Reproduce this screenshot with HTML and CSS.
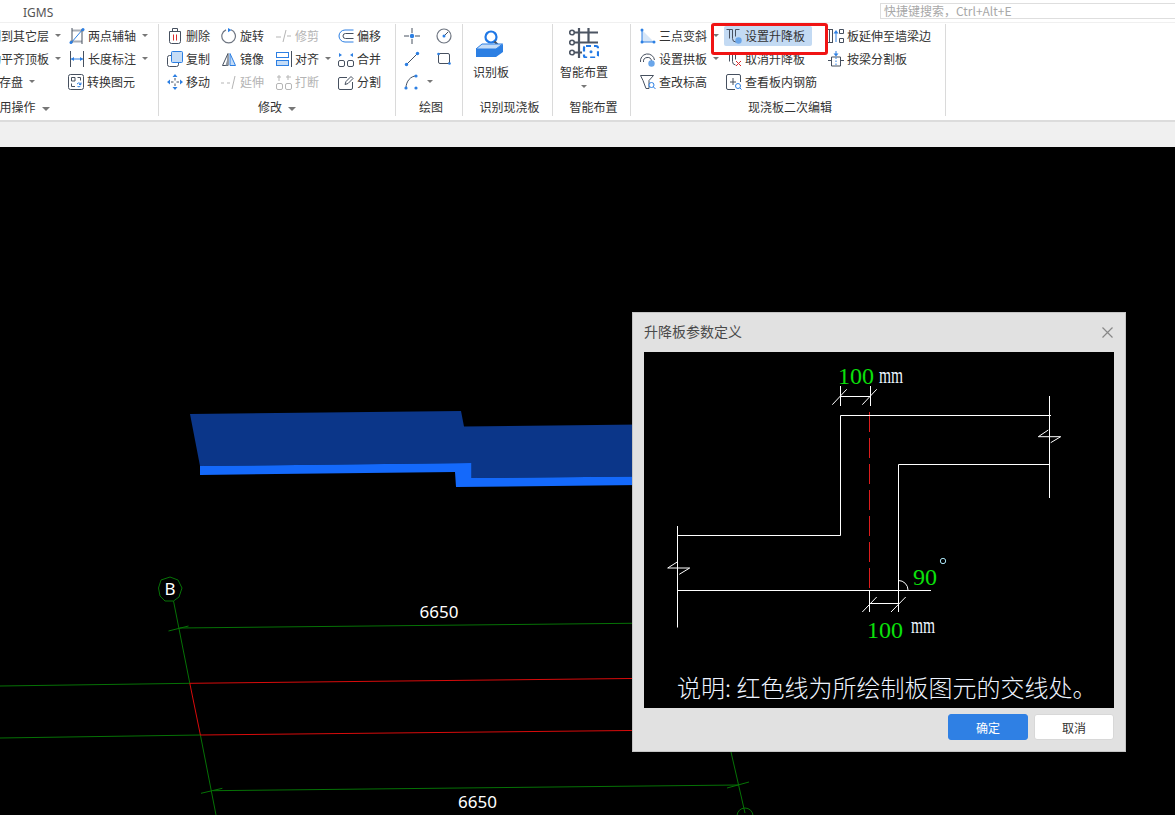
FILE: index.html
```html
<!DOCTYPE html>
<html lang="zh-CN">
<head>
<meta charset="utf-8">
<title>IGMS</title>
<link rel="stylesheet" href="styles.css">
</head>
<body>
<div class="app">
  <header class="titlebar">
    <span class="app-name">IGMS</span>
    <div class="search">快捷键搜索&#xFF0C;Ctrl+Alt+E</div>
  </header>

  <div class="ribbon">
    <section class="group group-common">
      <div class="tools cols-common">
        <div class="tool"><svg class="ico" viewBox="0 0 16 16"></svg><span>复制到其它层</span><i class="caret"></i></div>
        <div class="tool"><svg class="ico" viewBox="0 0 16 16"><path d="M3 2.500h12M1 13.500h12" class="st-gray-thick"/><path d="M3 0v15M13 1v15" class="st-dark"/><path d="M2 15L14 1" class="st-blue"/><circle cx="2" cy="14.500" r="1.500" class="fill-blue"/><circle cx="14" cy="1.500" r="1.500" class="fill-blue"/></svg><span>两点辅轴</span><i class="caret"></i></div>
        <div class="tool"><svg class="ico" viewBox="0 0 16 16"></svg><span>自动平齐顶板</span><i class="caret"></i></div>
        <div class="tool"><svg class="ico" viewBox="0 0 16 16"><path d="M1.500 0v16M14.500 0v16" class="st-dark"/><path d="M2 8h12" class="st-blue"/><path d="M2 8l3-2v4zM14 8l-3-2v4z" class="fill-blue"/></svg><span>长度标注</span><i class="caret"></i></div>
        <div class="tool tool-short"><svg class="ico" viewBox="0 0 16 16"></svg><span>云存盘</span><i class="caret"></i></div>
        <div class="tool tool-convert"><svg class="ico" viewBox="0 0 16 16"><rect x=".5" y=".5" width="15" height="15" rx="2" class="st-dark"/><path d="M3.500 7V3.500H7V7zM9.500 3.500h3v3M3.500 9.500v3H7" class="st-dark"/><path d="M9 10a2.500 2.500 0 0 1 3.500-.5M13 8.500v2h-2M12.500 12a2.500 2.500 0 0 1-3 .5" class="st-blue"/></svg><span>转换图元</span></div>
      </div>
      <div class="group-label">常用操作<i class="caret caret-label"></i></div>
    </section>

    <section class="group group-edit">
      <div class="tools cols-edit">
        <div class="tool"><svg class="ico" viewBox="0 0 16 16"><path d="M2.500 3.500h11v10a2 2 0 0 1-2 2h-7a2 2 0 0 1-2-2zM5.500 3.500V.5h5v3" class="st-dark"/><path d="M6.500 6.500v6M9.500 6.500v6" class="st-red"/></svg><span>删除</span></div>
        <div class="tool"><svg class="ico" viewBox="0 0 16 16"><path d="M10 1.800A6.800 6.800 0 1 1 5 1.900" class="st-grayd"/><path d="M7 0l3.500 2L7 4.200z" class="fill-blue"/></svg><span>旋转</span></div>
        <div class="tool tool-off"><svg class="ico" viewBox="0 0 16 16"><path d="M0 9h5M11 8h4M7 14l3-12" class="st-gray"/></svg><span>修剪</span></div>
        <div class="tool"><svg class="ico" viewBox="0 0 16 16"><path d="M15.500 2H7a6 6 0 0 0 0 12h8.500" class="st-blue"/><path d="M15.500 5.500H7.500a2.500 2.500 0 0 0 0 5h8" class="st-dark"/></svg><span>偏移</span></div>

        <div class="tool"><svg class="ico" viewBox="0 0 16 16"><rect x=".5" y="4.500" width="11" height="11" rx="2" class="st-dark"/><rect x="4.500" y=".5" width="11" height="11" rx="1" class="fill-light st-blue"/></svg><span>复制</span></div>
        <div class="tool"><svg class="ico" viewBox="0 0 16 16"><path d="M7 2.500L1.500 14.500H7z" class="fill-white st-dark"/><path d="M7.500 4v10.500H4.500z" class="fill-gray"/><path d="M9 2.500l5.500 12H9z" class="fill-light st-blue"/></svg><span>镜像</span></div>
        <div class="tool tool-align"><svg class="ico" viewBox="0 0 16 16"><rect x=".5" y="1.500" width="12" height="5" class="st-blue"/><rect x=".5" y="9.500" width="12" height="5" class="fill-light st-blue"/><path d="M15.500 0v16" class="st-dark"/></svg><span>对齐</span><i class="caret"></i></div>
        <div class="tool"><svg class="ico" viewBox="0 0 16 16"><rect x=".5" y="9.500" width="6" height="6" rx="1.500" class="st-dark"/><rect x="9.500" y="9.500" width="6" height="6" rx="1.500" class="st-dark"/><path d="M1 2l3 2-3 2zM15 2l-3 2 3 2z" class="fill-blue"/></svg><span>合并</span></div>

        <div class="tool"><svg class="ico" viewBox="0 0 16 16"><path d="M8 4v2.500M8 9.500V12M4 8h2.500M9.500 8H12" class="st-dark"/><path d="M8 0l2.500 3h-5zM8 16l2.500-3h-5zM0 8l3-2.500v5zM16 8l-3-2.500v5z" class="fill-blue"/></svg><span>移动</span></div>
        <div class="tool tool-off"><svg class="ico" viewBox="0 0 16 16"><path d="M0 9h3M6 9h3M11 15l3-13" class="st-gray"/></svg><span>延伸</span></div>
        <div class="tool tool-off"><svg class="ico" viewBox="0 0 16 16"><rect x=".5" y="9.500" width="6" height="6" rx="1.500" class="st-gray"/><rect x="9.500" y="9.500" width="6" height="6" rx="1.500" class="st-gray"/><path d="M3 1v6M1 3h4M10 3h5M12 1v5" class="st-gray"/></svg><span>打断</span></div>
        <div class="tool"><svg class="ico" viewBox="0 0 16 16"><path d="M9 3.500H2a1.500 1.500 0 0 0-1.500 1.500v9a1.500 1.500 0 0 0 1.500 1.500h11a1.500 1.500 0 0 0 1.500-1.500V8" class="st-dark"/><path d="M7 10.500l1-3 5-5 2 2-5 5z" class="st-dark"/></svg><span>分割</span></div>
      </div>
      <div class="group-label">修改<i class="caret caret-label"></i></div>
    </section>

    <section class="group group-draw">
      <div class="tools cols-draw">
        <div class="tool"><svg class="ico" viewBox="0 0 16 16"><path d="M0 8h5M11 8h5M8 0v5M8 11v5" class="st-dark"/><circle cx="8" cy="8" r="2.200" class="fill-blue"/></svg></div>
        <div class="tool"><svg class="ico" viewBox="0 0 16 16"><circle cx="8" cy="8" r="7" class="st-grayd"/><path d="M8 8l4-4" class="st-dark"/><circle cx="8" cy="8" r="1.500" class="fill-blue"/></svg></div>
        <div class="tool"><svg class="ico" viewBox="0 0 16 16"><path d="M3 13L13 3" class="st-dark"/><circle cx="2.500" cy="13.500" r="1.700" class="fill-blue"/><circle cx="13.500" cy="2.500" r="1.700" class="fill-blue"/></svg></div>
        <div class="tool"><svg class="ico" viewBox="0 0 16 16"><rect x="2.500" y="2.500" width="11" height="10" rx="1.500" class="st-dark"/><circle cx="2.500" cy="3" r="1.300" class="fill-blue"/><circle cx="13.500" cy="12.500" r="1.300" class="fill-blue"/></svg></div>
        <div class="tool tool-arc"><svg class="ico" viewBox="0 0 16 16"><path d="M2 14C2 7 7 2 12 2" class="st-dark"/><circle cx="2" cy="14" r="1.600" class="fill-blue"/><circle cx="12" cy="2" r="1.600" class="fill-blue"/><circle cx="12" cy="14" r="1.600" class="fill-blue"/></svg><i class="caret"></i></div>
      </div>
      <div class="group-label label-shift">绘图</div>
    </section>

    <section class="group group-detect">
      <div class="big big-detect">
        <svg class="ico-detect" viewBox="0 0 28 28"><circle cx="16" cy="7" r="5.500" class="st-blue-bold"/><path d="M19.500 11.500l3 3" class="st-dark-bold"/><path d="M1 19l6-5h20.500l-6.500 5z" class="fill-light st-blue"/><path d="M1 19h20v8H1zM21 19l7-5v8l-7 5z" class="fill-blue"/></svg>
        <span>识别板</span>
      </div>
      <div class="group-label label-shift">识别现浇板</div>
    </section>

    <section class="group group-smart">
      <div class="big big-smart">
        <svg class="ico-smart" viewBox="0 0 30 30"><path d="M4 4.500h25M4 14.500h25M4 24.500h9M10 0v30M19.500 0v15" class="st-slate"/><circle cx="3" cy="4.500" r="2.300" class="dot-slate"/><circle cx="3" cy="14.500" r="2.300" class="dot-slate"/><circle cx="3" cy="24.500" r="2.300" class="dot-slate"/><rect x="15" y="18" width="14" height="11.500" rx="2" class="st-dash"/><circle cx="22" cy="23.700" r="1.500" class="fill-blue"/></svg>
        <span>智能布置</span>
        <i class="caret caret-big"></i>
      </div>
      <div class="group-label label-shift">智能布置</div>
    </section>

    <section class="group group-slab">
      <div class="tools cols-slab">
        <div class="tool"><svg class="ico" viewBox="0 0 16 16"><path d="M2 2l12 12H2z" class="fill-pale"/><path d="M2 2v12h12" class="st-blue"/><circle cx="2" cy="2" r="1.500" class="fill-blue"/><circle cx="2" cy="14" r="1.500" class="fill-blue"/><circle cx="14" cy="14" r="1.500" class="fill-blue"/></svg><span>三点变斜</span><i class="caret"></i></div>
        <div class="tool tool-active"><svg class="ico" viewBox="0 0 16 16"><path d="M.5 1.500h6M3.500 1.500v9M6.500 1.500v9a3.500 3.500 0 0 0 3.500 3.500M9.500 1.500h4M9.500 1.500v7" class="st-dark"/><circle cx="12.500" cy="12.500" r="3.200" class="fill-gear"/></svg><span>设置升降板</span></div>
        <div class="tool"><svg class="ico" viewBox="0 0 16 16"><path d="M0 1.500h5M0 14.500h5M1.500 1.500v13M4.500 1.500v13M11.500 1.500h4v4h-4zM11.500 10.500h4v4h-4z" class="st-dark"/><path d="M8 14V4" class="st-blue"/><path d="M8 2l2.500 3.500h-5z" class="fill-blue"/></svg><span>板延伸至墙梁边</span></div>

        <div class="tool"><svg class="ico" viewBox="0 0 16 16"><path d="M.5 11A7 7 0 0 1 14.500 9M3.500 11a4 4 0 0 1 8-1" class="st-dark"/><circle cx="11.500" cy="12.500" r="3.200" class="fill-gear"/></svg><span>设置拱板</span><i class="caret"></i></div>
        <div class="tool"><svg class="ico" viewBox="0 0 16 16"><path d="M.5 1.500h6M3.500 1.500v9M6.500 1.500v9a3.500 3.500 0 0 0 3 3.500M9.500 1.500h4M9.500 1.500v7" class="st-dark"/><path d="M10 10l5 5M15 10l-5 5" class="st-red"/></svg><span>取消升降板</span></div>
        <div class="tool"><svg class="ico" viewBox="0 0 16 16"><path d="M0 9.500h3M13 9.500h3M3.500 6h9v9h-9zM3.500 6v9" class="st-dark"/><path d="M8 6.500v8" class="st-dashb"/><path d="M8 0v3" class="st-blue"/><path d="M8 5.500l-2.500-3h5z" class="fill-blue"/></svg><span>按梁分割板</span></div>

        <div class="tool"><svg class="ico" viewBox="0 0 16 16"><path d="M.5 1.500h13l-4.500 5v8H6l-3-8z" class="st-dark"/><circle cx="11.500" cy="11" r="2.500" class="fill-white st-blue"/><path d="M13.500 13l2 2" class="st-blue"/></svg><span>查改标高</span></div>
        <div class="tool"><svg class="ico" viewBox="0 0 16 16"><path d="M9 15.500H2a1.500 1.500 0 0 1-1.500-1.500V2A1.500 1.500 0 0 1 2 .5h11A1.500 1.500 0 0 1 14.500 2v6" class="st-dark"/><path d="M7 4v7M4 8h6" class="st-dark"/><circle cx="12" cy="12" r="2.500" class="st-blue"/><path d="M14 14l1.500 1.500" class="st-blue"/></svg><span>查看板内钢筋</span></div>
      </div>
      <div class="group-label label-shift">现浇板二次编辑</div>
    </section>

    <div class="red-mark"></div>
  </div>

  <div class="strip"></div>

  <main class="canvas">
    <svg class="scene" viewBox="0 147 1175 668">
      <polygon class="slab-top" points="190,414 461,411 464,426.500 640,424.500 640,476.500 471.500,478 471.500,463 200,466"/>
      <polygon class="slab-side" points="200,466 471.500,463 471.500,478 640,476.500 640,485 456,487 455,472 200,475"/>

      <polygon class="axis-head" points="170,577 178,580 182,588 179,597 173.500,601 165,601 160,596 158.500,588 161,580"/>
      <path class="grid-line" d="M173.500 601L189.800 683.300M200.400 735L216 815"/>
      <path class="grid-line" d="M179.500 628L640 623.200M168.500 631L188.500 626M0 686L189.800 683.300M0 738L200.400 735M213 790.700L738 785M201 793.300L222.400 788.300M727 788L749 782M731 752L745 813"/>
      <path class="axis-head" d="M737 816a8 8 0 0 1 16 0"/>
      <path class="red-line" d="M189.800 683.300L200.400 735M189.800 683.300L640 678.400M200.400 735L640 730.400"/>
      <text class="scene-b" x="170" y="595">B</text>
      <text class="scene-dim" x="439" y="618">6650</text>
      <text class="scene-dim" x="477.500" y="808">6650</text>
    </svg>

    <div class="dialog">
      <div class="dialog-title">
        <span class="dialog-name">升降板参数定义</span>
        <svg class="dialog-close" viewBox="0 0 11 11"><path d="M.5.5l10 10M10.500.5l-10 10"/></svg>
      </div>
      <svg class="sketch" viewBox="644 352 470 356">
        <path class="sk-red" d="M869.500 412V591"/>
        <path class="sk-line" d="M840.500 386V406M870.500 386V406M840.500 396.500H870.500M832.300 404.700L846.700 389.300M862.300 404.700L876.700 389.300"/>
        <path class="sk-line" d="M840.500 415.500H1051M840.500 415.500V535.500H677.500M677.500 526V627.500M677.500 590.500H931M898.500 590.500V464.500H1049.500M1049.500 396V498"/>
        <path class="sk-line" d="M1048.300 430L1038.300 436.700H1060.700L1050.700 442.700M677.700 561.700L667.700 568H689.700L679.300 574.300"/>
        <path class="sk-line" d="M869.500 591V612M898.500 591V612M869.500 603.500H898.500M862.300 612L876.700 597M891 612L905.700 597M898.500 580.500A9.500 9.500 0 0 1 908 590"/>
        <circle class="sk-deg" cx="943" cy="561" r="2.700"/>
        <text class="sk-num" x="838" y="384">100</text>
        <text class="sk-unit" transform="translate(879 383) scale(1 1.450)">mm</text>
        <text class="sk-num" x="913" y="585">90</text>
        <text class="sk-num" x="867" y="637.500">100</text>
        <text class="sk-unit" transform="translate(911 633) scale(1 1.450)">mm</text>
        <text class="sk-note" x="677" y="696.500">说明<tspan x="725">:</tspan><tspan x="736.500">红色线为所绘制板图元的交线处。</tspan></text>
      </svg>
      <div class="dialog-actions">
        <button class="btn btn-primary">确定</button>
        <button class="btn">取消</button>
      </div>
    </div>
  </main>
</div>
</body>
</html>
```
FILE: styles.css
```css
* { box-sizing: border-box; }

html, body {
  margin: 0;
  height: 100%;
  overflow: hidden;
}

body {
  font-family: "Noto Sans CJK SC", "Noto Sans", sans-serif;
  font-size: 12px;
  color: #333;
  background: #000;
}

.app {
  display: flex;
  flex-direction: column;
  height: 100vh;
}

/* title bar */
.titlebar {
  flex: none;
  height: 22px;
  display: flex;
  justify-content: space-between;
  align-items: center;
  padding: 3px 0 3px 23px;
  background: #fff;
}

.app-name {
  font-family: "Noto Sans", sans-serif;
  color: #555;
  position: relative;
  top: 1px;
}

.search {
  width: 295px;
  height: 16px;
  line-height: 14px;
  padding-left: 3px;
  border: 1px solid #dedede;
  border-right: 0;
  color: #a8a8a8;
  white-space: nowrap;
}

/* ribbon */
.ribbon {
  flex: none;
  position: relative;
  height: 100px;
  display: flex;
  align-items: flex-start;
  padding-top: 1px;
  background: #fff;
  border-top: 1px solid #f0f0f0;
  border-bottom: 2px solid #dcdcdc;
}

.group {
  height: 92px;
  display: flex;
  flex-direction: column;
  border-right: 1px solid #dadada;
  flex: none;
}

.group-common { width: 280px; margin-left: -121px; padding-left: 79px; }
.group-edit   { width: 237px; padding-left: 8px; }
.group-draw   { width: 67px;  padding-left: 8px; }
.group-detect { width: 90px;  padding-left: 10px; }
.group-smart  { width: 78px;  padding-left: 7px; }
.group-slab   { width: 315px; padding-left: 9px; }

.tools {
  display: grid;
  grid-auto-rows: 23px;
}

.cols-common { grid-template-columns: 111px auto; }
.cols-edit   { grid-template-columns: 54px 55px 62px auto; }
.cols-draw   { grid-template-columns: 32px 20px; }
.cols-slab   { grid-template-columns: 86px 102px auto; }

.tool {
  display: flex;
  align-items: center;
  gap: 3px;
  white-space: nowrap;
}

.tool-short { margin-left: 10px; }
.tool-off { color: #b4b4b4; }
.tool-align { gap: 3px; }
.tool-arc { grid-column: 1 / span 2; gap: 4px; }
.tool-convert { margin-left: -1px; }

.tool-active {
  align-self: center;
  justify-self: start;
  height: 20px;
  margin-left: -2px;
  padding: 0 7px 0 2px;
  border-radius: 2px;
  background: #c3daf3;
}

.ico {
  width: 16px;
  height: 16px;
  flex: none;
}

.caret {
  flex: none;
  display: inline-block;
  width: 0;
  height: 0;
  margin-left: 3px;
  border-style: solid;
  border-width: 3px 3px 0;
  border-color: #777 transparent transparent;
}

.caret-label {
  margin-left: 6px;
  border-width: 4px 4px 0;
  vertical-align: 1px;
}

.caret-big { margin: 4px 0 0; }

.group-label {
  margin-top: auto;
  height: 18px;
  line-height: 18px;
  text-align: center;
  white-space: nowrap;
  margin-left: -8px;
}

.group-common .group-label { margin-left: -79px; }
.label-shift { padding-left: 4px; }
.group-detect .group-label { margin-left: -10px; }
.group-smart .group-label { margin-left: -7px; }
.group-slab .group-label { margin-left: -9px; }

.big {
  display: flex;
  flex-direction: column;
  height: 66px;
  line-height: 18px;
  white-space: nowrap;
}

.big-smart { align-items: center; width: 48px; padding-top: 4px; }
.big-detect { align-items: flex-start; padding-top: 6px; }

.ico-detect { width: 28px; height: 28px; margin: 0 0 5px 2px; }
.ico-smart { width: 30px; height: 30px; margin-bottom: 5px; }

.red-mark {
  position: absolute;
  left: 711px;
  top: 0;
  width: 117px;
  height: 32px;
  border: 3px solid #f01414;
  border-radius: 3px;
}

.strip {
  flex: none;
  height: 25px;
  background: #f0f0f0;
}

/* icon paint */
.st-dark, .st-blue, .st-red, .st-gray, .st-grayd, .st-blue-bold, .st-dark-bold, .st-slate, .st-dash, .st-dashb, .st-gray-thick {
  fill: none;
  stroke-width: 1;
}
.st-dark { stroke: #46505f; }
.st-blue { stroke: #2c7fe3; }
.st-red { stroke: #d92b2b; }
.st-gray { stroke: #b5b5b5; }
.st-gray-thick { stroke: #a9aeb6; stroke-width: 2; }
.st-grayd { stroke: #6f7682; stroke-width: 1.200; }
.st-blue-bold { stroke: #1f78e6; stroke-width: 2.200; }
.st-dark-bold { stroke: #46505f; stroke-width: 2.200; }
.st-slate { stroke: #4c5563; stroke-width: 2.200; }
.st-dash { stroke: #1f78e6; stroke-width: 2.200; stroke-dasharray: 5 3; }
.st-dashb { stroke: #2c7fe3; stroke-dasharray: 1.500 1.500; }
.fill-blue { fill: #2c7fe3; stroke: none; }
.fill-gear { fill: #6aa6ea; stroke: none; }
.fill-light { fill: #c5dcf6; }
.fill-white { fill: #fff; }
.fill-gray { fill: #8f959e; stroke: none; }
.fill-pale { fill: #d6e6f8; }
.dot-slate { fill: #fff; stroke: #4c5563; stroke-width: 1.600; }

/* canvas */
.canvas {
  flex: 1;
  position: relative;
  background: #000;
  overflow: hidden;
}

.scene {
  display: block;
  width: 100%;
  height: 100%;
}

.slab-top { fill: #0b3689; }
.slab-side { fill: #1469fb; }
.axis-head { fill: none; stroke: #067206; stroke-width: 1; }
.grid-line { fill: none; stroke: #067206; stroke-width: 1; }
.red-line { fill: none; stroke: #d80b0b; stroke-width: 1; }
.scene-b, .scene-dim {
  font-family: "Noto Sans", sans-serif;
  fill: #fff;
  text-anchor: middle;
}
.scene-b { font-size: 17px; }
.scene-dim { font-size: 17px; }

/* dialog */
.dialog {
  position: absolute;
  left: 632px;
  top: 165px;
  width: 494px;
  height: 440px;
  display: flex;
  flex-direction: column;
  padding: 0 11px;
  background: #e1e1e1;
  border: 1px solid #c4c4c4;
}

.dialog-title {
  flex: none;
  height: 39px;
  display: flex;
  justify-content: space-between;
  align-items: center;
  font-size: 14px;
  color: #4a4a4a;
}

.dialog-name { margin-bottom: 4px; }

.dialog-close {
  width: 11px;
  height: 11px;
  margin: 0 1px 1px 0;
  fill: none;
  stroke: #888;
  stroke-width: 1.200;
}

.sketch {
  flex: none;
  display: block;
  width: 470px;
  height: 356px;
  background: #000;
}

.sk-line { fill: none; stroke: #fff; stroke-width: 1; }
.sk-red { fill: none; stroke: #dc1c1c; stroke-width: 1; stroke-dasharray: 20 6; }
.sk-deg { fill: none; stroke: #a8e0f0; stroke-width: 1; }
.sk-num {
  font-family: "Liberation Serif", serif;
  font-size: 24px;
  fill: #0be00b;
}
.sk-unit {
  font-family: "Liberation Serif", serif;
  font-size: 15.500px;
  fill: #eaf4ff;
}
.sk-note {
  font-family: "Noto Sans CJK SC", sans-serif;
  font-size: 24px;
  font-weight: 300;
  fill: #eef4ff;
}

.dialog-actions {
  flex: none;
  display: flex;
  justify-content: flex-end;
  gap: 6px;
  padding-top: 6px;
}

.btn {
  width: 80px;
  height: 26px;
  padding: 0;
  font: inherit;
  color: #333;
  background: #fff;
  border: 1px solid #d8d8d8;
  border-radius: 3px;
}

.btn-primary {
  color: #fff;
  background: #2f80e4;
  border-color: #2f80e4;
}
```
